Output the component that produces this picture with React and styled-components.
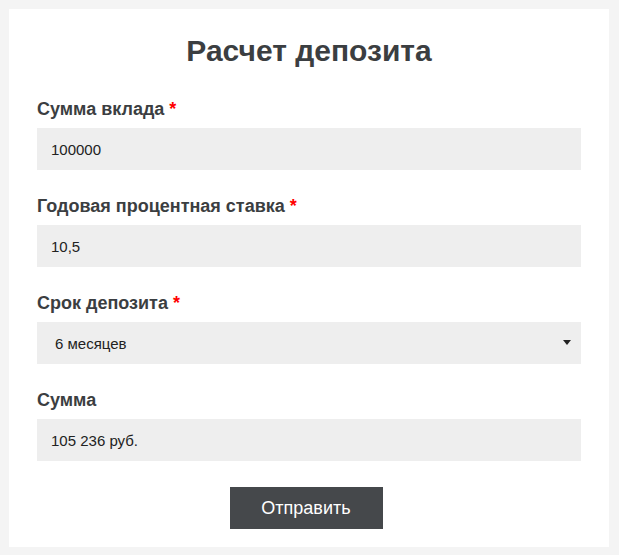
import React, { useState } from 'react';
import styled, { createGlobalStyle } from 'styled-components';

const GlobalStyle = createGlobalStyle`
  html, body {
    margin: 0;
    padding: 0;
    background: #f4f4f4;
  }
  body {
    padding: 9px;
    font-family: "Liberation Sans", Arial, sans-serif;
  }
`;

const Card = styled.form`
  width: 600px;
  box-sizing: border-box;
  background: #fff;
  padding: 25px 28px 18px;
`;

const Title = styled.h2`
  margin: 0 0 31px;
  font-size: 30px;
  line-height: 34px;
  font-weight: 700;
  text-align: center;
  color: #3b3e41;
`;

const Field = styled.div`
  margin-bottom: 26px;

  &:last-of-type {
    margin-bottom: 25px;
  }
`;

const Label = styled.label`
  display: block;
  margin-bottom: 9px;
  font-size: 18px;
  line-height: 20px;
  font-weight: 700;
  color: #3b3e41;
`;

const Required = styled.span`
  color: #ff0000;
`;

const Input = styled.input`
  display: block;
  width: 100%;
  height: 42px;
  box-sizing: border-box;
  border: none;
  outline: none;
  background: #eeeeee;
  padding: 0 14px;
  font-family: inherit;
  font-size: 15px;
  color: #222;
`;

const SelectWrap = styled.div`
  position: relative;
`;

const Select = styled.select`
  display: block;
  width: 100%;
  height: 42px;
  box-sizing: border-box;
  border: none;
  outline: none;
  border-radius: 0;
  appearance: none;
  background: #eeeeee;
  padding: 0 30px 0 18px;
  font-family: inherit;
  font-size: 15px;
  color: #222;
`;

const Arrow = styled.svg`
  position: absolute;
  right: 10px;
  top: 18px;
  pointer-events: none;
`;

const Actions = styled.div`
  display: flex;
  justify-content: center;
  padding-right: 6px;
`;

const Submit = styled.button`
  width: 153px;
  height: 42px;
  border: none;
  background: #45484b;
  color: #fff;
  font-family: inherit;
  font-size: 18px;
  cursor: pointer;
`;

const terms = ['3 месяца', '6 месяцев', '12 месяцев', '24 месяца'];

export default function App() {
  const [amount, setAmount] = useState('100000');
  const [rate, setRate] = useState('10,5');
  const [term, setTerm] = useState('6 месяцев');

  return (
    <>
      <GlobalStyle />
      <Card onSubmit={(e) => e.preventDefault()}>
        <Title>Расчет депозита</Title>

        <Field>
          <Label>Сумма вклада <Required>*</Required></Label>
          <Input value={amount} onChange={(e) => setAmount(e.target.value)} />
        </Field>

        <Field>
          <Label>Годовая процентная ставка <Required>*</Required></Label>
          <Input value={rate} onChange={(e) => setRate(e.target.value)} />
        </Field>

        <Field>
          <Label>Срок депозита <Required>*</Required></Label>
          <SelectWrap>
            <Select value={term} onChange={(e) => setTerm(e.target.value)}>
              {terms.map((t) => <option key={t}>{t}</option>)}
            </Select>
            <Arrow width="8" height="5" viewBox="0 0 8 5">
              <path d="M0 0H8L4 5Z" fill="#222" />
            </Arrow>
          </SelectWrap>
        </Field>

        <Field>
          <Label>Сумма</Label>
          <Input value="105 236 руб." readOnly />
        </Field>

        <Actions>
          <Submit type="submit">Отправить</Submit>
        </Actions>
      </Card>
    </>
  );
}
